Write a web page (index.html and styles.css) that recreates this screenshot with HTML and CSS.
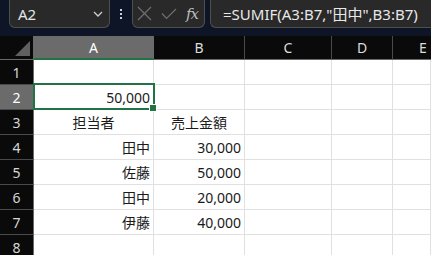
FILE: index.html
```html
<!DOCTYPE html>
<html lang="ja">
<head>
<meta charset="utf-8">
<link rel="stylesheet" href="styles.css">
</head>
<body>
<div class="app">
  <div class="toolbar">
    <div class="namebox">
      <span class="ref">A2</span>
      <svg class="chev" width="10" height="6" viewBox="0 0 10 6"><path d="M1 1 L5 5 L9 1" fill="none" stroke="#cfcfcf" stroke-width="1.3"/></svg>
    </div>
    <div class="dots"><i></i><i></i><i></i></div>
    <div class="fxbox">
      <svg class="ico" width="15" height="15" viewBox="0 0 15 15"><path d="M1 1 L14 14 M14 1 L1 14" fill="none" stroke="#6f6f6f" stroke-width="1.2"/></svg>
      <svg class="ico" width="16" height="12" viewBox="0 0 16 12"><path d="M1 5.5 L5.5 10.5 L15 1" fill="none" stroke="#6f6f6f" stroke-width="1.2"/></svg>
      <span class="fx">fx</span>
    </div>
    <div class="formula">=SUMIF(A3:B7,"田中",B3:B7)</div>
  </div>
  <div class="sheet">
    <div class="corner"><span class="tri"></span></div>
    <div class="colh sel">A</div>
    <div class="colh">B</div>
    <div class="colh">C</div>
    <div class="colh">D</div>
    <div class="colh last">E</div>

    <div class="rowh">1</div><div class="c"></div><div class="c"></div><div class="c"></div><div class="c"></div><div class="c"></div>
    <div class="rowh sel">2</div><div class="c r">50,000</div><div class="c"></div><div class="c"></div><div class="c"></div><div class="c"></div>
    <div class="rowh">3</div><div class="c m">担当者</div><div class="c m">売上金額</div><div class="c"></div><div class="c"></div><div class="c"></div>
    <div class="rowh">4</div><div class="c r">田中</div><div class="c r">30,000</div><div class="c"></div><div class="c"></div><div class="c"></div>
    <div class="rowh">5</div><div class="c r">佐藤</div><div class="c r">50,000</div><div class="c"></div><div class="c"></div><div class="c"></div>
    <div class="rowh">6</div><div class="c r">田中</div><div class="c r">20,000</div><div class="c"></div><div class="c"></div><div class="c"></div>
    <div class="rowh">7</div><div class="c r">伊藤</div><div class="c r">40,000</div><div class="c"></div><div class="c"></div><div class="c"></div>
    <div class="rowh">8</div><div class="c"></div><div class="c"></div><div class="c"></div><div class="c"></div><div class="c"></div>

    <div class="selbox"><span class="handle"></span></div>
  </div>
</div>
</body>
</html>
```

FILE: styles.css
```css
* { box-sizing: border-box; }
html, body { margin: 0; padding: 0; }
body {
  width: 431px;
  height: 255px;
  overflow: hidden;
  background: #ffffff;
  font-family: "Noto Sans", "Noto Sans CJK JP", sans-serif;
}
.app { width: 431px; height: 255px; overflow: hidden; }

.toolbar {
  height: 36px;
  background: #0e1526;
  display: flex;
  align-items: flex-start;
}
.namebox {
  margin-left: 9px;
  width: 101px;
  height: 28px;
  background: #292929;
  border: 1px solid #4f4f4f;
  border-top: none;
  border-radius: 0 0 6px 6px;
  display: flex;
  align-items: center;
  justify-content: space-between;
  padding: 0 6px 0 8px;
}
.ref {
  color: #e6e6e6;
  font-size: 15px;
  font-family: "Noto Sans", sans-serif;
  line-height: 1;
  margin-top: 1px;
}
.chev { margin-top: 1px; }
.dots {
  width: 22px;
  height: 28px;
  display: flex;
  flex-direction: column;
  align-items: center;
  justify-content: center;
  gap: 2px;
}
.dots i {
  display: block;
  width: 2px;
  height: 2px;
  background: #d0d0d0;
}
.fxbox {
  width: 73px;
  height: 28px;
  background: #292929;
  border: 1px solid #4f4f4f;
  border-top: none;
  border-radius: 0 0 6px 6px;
  display: flex;
  align-items: center;
  padding-left: 4px;
  gap: 9px;
}
.fx {
  font-family: "DejaVu Serif", "Liberation Serif", serif;
  font-style: italic;
  font-size: 15px;
  color: #bdbdbd;
  letter-spacing: -1px;
}
.formula {
  margin-left: 5px;
  flex: 1;
  height: 28px;
  background: #292929;
  border: 1px solid #4f4f4f;
  border-top: none;
  border-right: none;
  border-radius: 0 0 0 6px;
  color: #e8e8e8;
  font-size: 15px;
  font-family: "Noto Sans", "Noto Sans CJK JP", sans-serif;
  display: flex;
  align-items: center;
  padding-left: 12px;
  white-space: nowrap;
  overflow: hidden;
}

.sheet {
  position: relative;
  display: grid;
  grid-template-columns: 34px 120px 91px 87px 61px 1fr;
  grid-template-rows: 24px repeat(8, 25px);
  font-size: 14px;
}
.corner {
  position: relative;
  background: #0a0a0a;
  border-right: 1px solid #6a6a6a;
  border-bottom: 1px solid #6a6a6a;
}
.tri {
  position: absolute;
  right: 3px;
  bottom: 3px;
  width: 0;
  height: 0;
  border-left: 15px solid transparent;
  border-bottom: 15px solid #606060;
}
.colh {
  background: #0a0a0a;
  color: #dcdcdc;
  border-right: 1px solid #4a4a4a;
  border-bottom: 1px solid #6a6a6a;
  display: flex;
  align-items: center;
  justify-content: center;
  font-size: 14px;
}
.colh.last {
  justify-content: flex-start;
  padding-left: 26px;
  border-right: none;
}
.colh.sel {
  background: #6b6b6b;
  color: #ffffff;
  border-bottom: 2px solid #217346;
  border-right-color: #6b6b6b;
}
.rowh {
  background: #0a0a0a;
  color: #d6d6d6;
  border-right: 1px solid #6a6a6a;
  border-bottom: 1px solid #4a4a4a;
  display: flex;
  align-items: center;
  justify-content: center;
  font-size: 14px;
}
.rowh.sel {
  background: #6b6b6b;
  color: #ffffff;
}
.c {
  background: #ffffff;
  border-right: 1px solid #e0e0e0;
  border-bottom: 1px solid #e0e0e0;
  color: #1a1a1a;
  display: flex;
  align-items: center;
  padding: 0 3px;
  white-space: nowrap;
  overflow: hidden;
}
.c.r { justify-content: flex-end; }
.c.m { justify-content: center; }

.selbox {
  position: absolute;
  left: 33px;
  top: 47px;
  width: 122px;
  height: 27px;
  border: 2px solid #217346;
  pointer-events: none;
}
.handle {
  position: absolute;
  right: -4px;
  bottom: -4px;
  width: 6px;
  height: 6px;
  background: #217346;
  border: 1px solid #ffffff;
  box-sizing: content-box;
}
```
